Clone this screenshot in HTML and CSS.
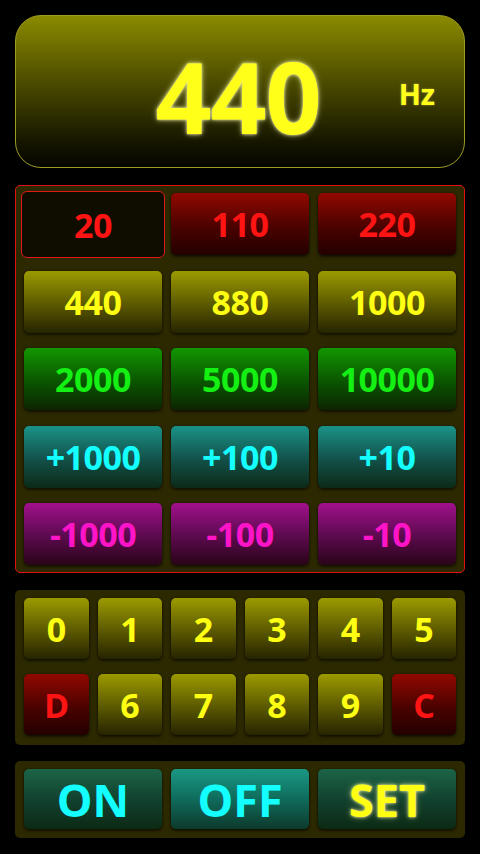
FILE: index.html
```html
<!DOCTYPE html>
<html>
<head>
<meta charset="utf-8">
<link rel="stylesheet" href="styles.css">
</head>
<body>
<div class="app">
  <div class="display">
    <span class="spacer"></span>
    <span class="freq">440</span>
    <span class="unit">Hz</span>
  </div>

  <div class="panel presets">
    <div class="btn red selected">20</div>
    <div class="btn red">110</div>
    <div class="btn red">220</div>
    <div class="btn olive">440</div>
    <div class="btn olive">880</div>
    <div class="btn olive">1000</div>
    <div class="btn green">2000</div>
    <div class="btn green">5000</div>
    <div class="btn green">10000</div>
    <div class="btn teal">+1000</div>
    <div class="btn teal">+100</div>
    <div class="btn teal">+10</div>
    <div class="btn magenta">-1000</div>
    <div class="btn magenta">-100</div>
    <div class="btn magenta">-10</div>
  </div>

  <div class="panel keypad">
    <div class="btn olive">0</div>
    <div class="btn olive">1</div>
    <div class="btn olive">2</div>
    <div class="btn olive">3</div>
    <div class="btn olive">4</div>
    <div class="btn olive">5</div>
    <div class="btn red">D</div>
    <div class="btn olive">6</div>
    <div class="btn olive">7</div>
    <div class="btn olive">8</div>
    <div class="btn olive">9</div>
    <div class="btn red">C</div>
  </div>

  <div class="panel controls">
    <div class="btn dark big cyan-text">ON</div>
    <div class="btn bright big cyan-text">OFF</div>
    <div class="btn dark big set">SET</div>
  </div>
</div>
</body>
</html>
```

FILE: styles.css
```css
html, body {
  margin: 0;
  padding: 0;
  background: #000;
}
body {
  width: 480px;
  height: 854px;
  overflow: hidden;
  font-family: "Open Sans", "DejaVu Sans", sans-serif;
  font-weight: 700;
}
.app {
  display: flex;
  flex-direction: column;
  padding: 15px 15px 0 15px;
}
.display {
  height: 151px;
  border: 1px solid #9c9c22;
  border-radius: 26px;
  background: linear-gradient(to bottom, #8a8a00 0%, #4a4a00 45%, #141400 85%, #050500 100%);
  display: grid;
  grid-template-columns: 1fr auto 1fr;
  align-items: center;
}
.freq {
  font-size: 98px;
  line-height: 1;
  color: #ffff1a;
  letter-spacing: -1px;
  text-shadow: 0 0 3px #ffffb0, 0 0 6px rgba(255,255,170,0.6);
  padding-top: 8px;
  margin-left: -4px;
}
.unit {
  justify-self: end;
  padding-right: 29px;
  font-size: 29px;
  color: #ffff1a;
  text-shadow: 0 0 2px rgba(255,255,150,0.6);
  padding-top: 4px;
}
.panel {
  background: #2c2900;
  border-radius: 5px;
  display: grid;
  padding: 8px;
}
.presets {
  margin-top: 17px;
  padding: 7px 8px;
  border: 1px solid #e01010;
  grid-template-columns: repeat(3, 138px);
  grid-auto-rows: 62px;
  column-gap: 9px;
  row-gap: 15.5px;
}
.keypad {
  margin-top: 17px;
  padding: 8px 9px 10px 9px;
  grid-template-columns: repeat(6, 64.5px);
  grid-auto-rows: 61px;
  column-gap: 9px;
  row-gap: 15px;
}
.controls {
  margin-top: 16px;
  padding: 8px 9px 9px 9px;
  grid-template-columns: repeat(3, 138px);
  grid-auto-rows: 60px;
  column-gap: 9px;
}
.btn {
  display: flex;
  align-items: center;
  justify-content: center;
  border-radius: 5px;
  font-size: 34px;
  line-height: 1;
  box-shadow: 0 2px 3px rgba(0,0,0,0.55), 0 0 2px rgba(0,0,0,0.5);
  letter-spacing: -0.5px;
}
.red {
  background: linear-gradient(to bottom, #920800, #4a0200 55%, #220000);
  color: #ff1414;
}
.olive {
  background: linear-gradient(to bottom, #9c9a00, #5a5800 55%, #262400);
  color: #ffff14;
}
.green {
  background: linear-gradient(to bottom, #129600, #0a5400 55%, #0c2400);
  color: #14f014;
}
.teal {
  background: linear-gradient(to bottom, #1a9288, #125048 55%, #0c2a18);
  color: #14ffff;
}
.magenta {
  background: linear-gradient(to bottom, #a0108c, #5a0a4c 55%, #2a0418);
  color: #ff14c8;
}
.selected {
  margin: -2px -3px -3px -3px;
  border: 1px solid #e01818;
  border-radius: 6px;
  background: #0e0d00;
  box-shadow: none;
}
.big {
  font-size: 45px;
  letter-spacing: 0;
}
.dark {
  background: linear-gradient(to bottom, #1c6446, #124230 50%, #0c2a14);
}
.bright {
  background: linear-gradient(to bottom, #1a9884, #107060 45%, #0c3a2c);
}
.cyan-text {
  color: #14ffff;
}
.set {
  color: #ffff14;
  text-shadow: 0 0 3px #ffffa0, 0 0 6px rgba(255,255,160,0.5);
}
```
